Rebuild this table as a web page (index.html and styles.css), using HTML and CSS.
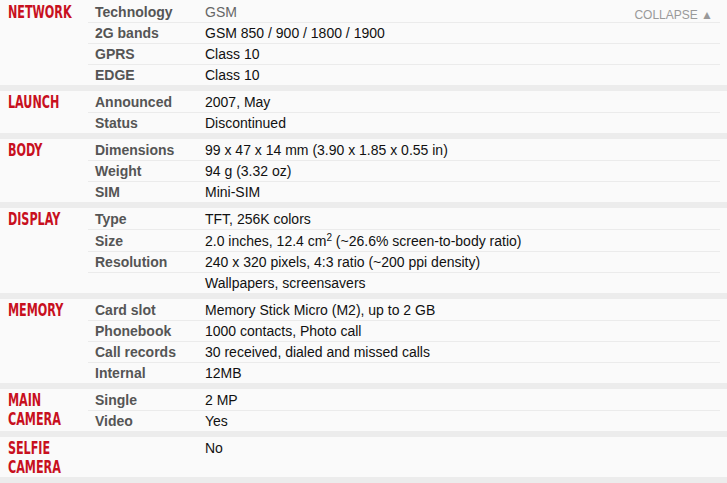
FILE: index.html
```html
<!DOCTYPE html>
<html>
<head>
<meta charset="utf-8">
<link rel="stylesheet" href="styles.css">
</head>
<body>
<div class="specs">
  <section class="sec">
    <h2 class="cat">NETWORK</h2>
    <div class="rows">
      <div class="row"><span class="lbl">Technology</span><span class="val link">GSM</span><span class="collapse">COLLAPSE &#9650;</span></div>
      <div class="row"><span class="lbl">2G bands</span><span class="val">GSM 850 / 900 / 1800 / 1900</span></div>
      <div class="row"><span class="lbl">GPRS</span><span class="val">Class 10</span></div>
      <div class="row"><span class="lbl">EDGE</span><span class="val">Class 10</span></div>
    </div>
  </section>
  <section class="sec">
    <h2 class="cat">LAUNCH</h2>
    <div class="rows">
      <div class="row"><span class="lbl">Announced</span><span class="val">2007, May</span></div>
      <div class="row"><span class="lbl">Status</span><span class="val">Discontinued</span></div>
    </div>
  </section>
  <section class="sec">
    <h2 class="cat">BODY</h2>
    <div class="rows">
      <div class="row"><span class="lbl">Dimensions</span><span class="val">99 x 47 x 14 mm (3.90 x 1.85 x 0.55 in)</span></div>
      <div class="row"><span class="lbl">Weight</span><span class="val">94 g (3.32 oz)</span></div>
      <div class="row"><span class="lbl">SIM</span><span class="val">Mini-SIM</span></div>
    </div>
  </section>
  <section class="sec">
    <h2 class="cat">DISPLAY</h2>
    <div class="rows">
      <div class="row"><span class="lbl">Type</span><span class="val">TFT, 256K colors</span></div>
      <div class="row tall"><span class="lbl">Size</span><span class="val">2.0 inches, 12.4 cm<sup>2</sup> (~26.6% screen-to-body ratio)</span></div>
      <div class="row"><span class="lbl">Resolution</span><span class="val">240 x 320 pixels, 4:3 ratio (~200 ppi density)</span></div>
      <div class="row"><span class="lbl"></span><span class="val">Wallpapers, screensavers</span></div>
    </div>
  </section>
  <section class="sec">
    <h2 class="cat">MEMORY</h2>
    <div class="rows">
      <div class="row"><span class="lbl">Card slot</span><span class="val">Memory Stick Micro (M2), up to 2 GB</span></div>
      <div class="row"><span class="lbl">Phonebook</span><span class="val">1000 contacts, Photo call</span></div>
      <div class="row"><span class="lbl">Call records</span><span class="val">30 received, dialed and missed calls</span></div>
      <div class="row"><span class="lbl">Internal</span><span class="val">12MB</span></div>
    </div>
  </section>
  <section class="sec">
    <h2 class="cat">MAIN<br>CAMERA</h2>
    <div class="rows">
      <div class="row"><span class="lbl">Single</span><span class="val">2 MP</span></div>
      <div class="row"><span class="lbl">Video</span><span class="val">Yes</span></div>
    </div>
  </section>
  <section class="sec">
    <h2 class="cat">SELFIE<br>CAMERA</h2>
    <div class="rows">
      <div class="row"><span class="lbl"></span><span class="val">No</span></div>
    </div>
  </section>
</div>
</body>
</html>
```
FILE: styles.css
```css
html, body {
  margin: 0;
  padding: 0;
  background: #fafafa;
}
.specs {
  width: 727px;
  padding-top: 1px;
  font-family: "Liberation Sans", Arial, sans-serif;
  font-size: 14px;
  color: #111;
}
.sec {
  display: flex;
  border-bottom: 6px solid #ececec;
}
.cat {
  width: 88px;
  flex: none;
  margin: 0;
  padding: 1px 0 1px 11.5px;
  box-sizing: border-box;
  font-family: "DejaVu Sans Condensed", "DejaVu Sans", sans-serif;
  font-stretch: condensed;
  font-weight: bold;
  font-size: 18px;
  line-height: 19px;
  color: #c8101e;
  transform: scaleX(0.69);
  transform-origin: left center;
  white-space: nowrap;
}
.rows {
  flex: 1;
  padding-right: 7px;
}
.row {
  display: flex;
  align-items: center;
  height: 21px;
  border-top: 1px solid #ebebeb;
  box-sizing: border-box;
}
.row:first-child {
  border-top-color: transparent;
}
.row.tall {
  height: 22px;
}
.lbl {
  width: 117px;
  flex: none;
  padding-left: 7px;
  box-sizing: border-box;
  font-weight: bold;
  color: #555;
}
.val {
  color: #111;
}
.val.link {
  color: #666;
}
sup {
  font-size: 10px;
  line-height: 0;
  vertical-align: 5px;
}
.collapse {
  margin-left: auto;
  margin-right: 7px;
  align-self: flex-start;
  padding-top: 6px;
  font-size: 12px;
  line-height: 14px;
  color: #999;
}
```
